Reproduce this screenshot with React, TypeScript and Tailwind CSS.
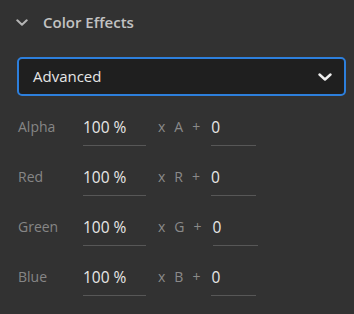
const rows = [
  { label: 'Alpha', ch: 'A' },
  { label: 'Red', ch: 'R' },
  { label: 'Green', ch: 'G' },
  { label: 'Blue', ch: 'B' },
];

function Chevron({ className }: { className?: string }) {
  return (
    <svg viewBox="0 0 14 8" className={className} fill="none">
      <path d="M1.5 1.5 L7 6.5 L12.5 1.5" stroke="currentColor" strokeWidth="2.4" strokeLinecap="round" strokeLinejoin="round" />
    </svg>
  );
}

export default function App() {
  return (
    <div className="w-[354px] h-[314px] bg-[#323232] overflow-hidden font-['Open_Sans',sans-serif]">
      {/* Section header */}
      <div className="flex items-center h-5 mt-3 pl-[16px]">
        <Chevron className="w-[12px] h-[7px] text-[#b4b4b4]" />
        <span className="ml-[15px] text-[15px] font-semibold text-[#c2c2c2] leading-5">Color Effects</span>
      </div>

      {/* Mode dropdown */}
      <div className="mt-[25px] ml-[17px] w-[329px] h-[39px] rounded-[5px] border-2 border-[#2d7fdc] bg-[#1f1f1f] flex items-center justify-between pl-[14px] pr-[12px]">
        <span className="text-[15px] text-[#e6e6e6]">Advanced</span>
        <Chevron className="w-[14px] h-[8px] text-[#ededed]" />
      </div>

      {/* Channel rows */}
      <div className="mt-5 pl-[18px] flex flex-col gap-5">
        {rows.map((r) => (
          <div key={r.label} className="flex items-start h-[30px]">
            <div className="w-[65px] pt-px leading-5 text-[14px] text-[#868686]">{r.label}</div>
            <div className="w-[63px] pt-px pb-[8px] leading-5 border-b border-[#575757] text-[15.5px] text-[#e8e8e8]">100 %</div>
            <div className="ml-3 flex gap-[9px] pt-px leading-5 text-[14px] text-[#8a8a8a]">
              <span>x</span>
              <span>{r.ch}</span>
              <span>+</span>
            </div>
            <div className="ml-[11px] w-[45px] pt-px pb-[8px] leading-5 border-b border-[#575757] text-[15.5px] text-[#e8e8e8]">0</div>
          </div>
        ))}
      </div>
    </div>
  );
}
